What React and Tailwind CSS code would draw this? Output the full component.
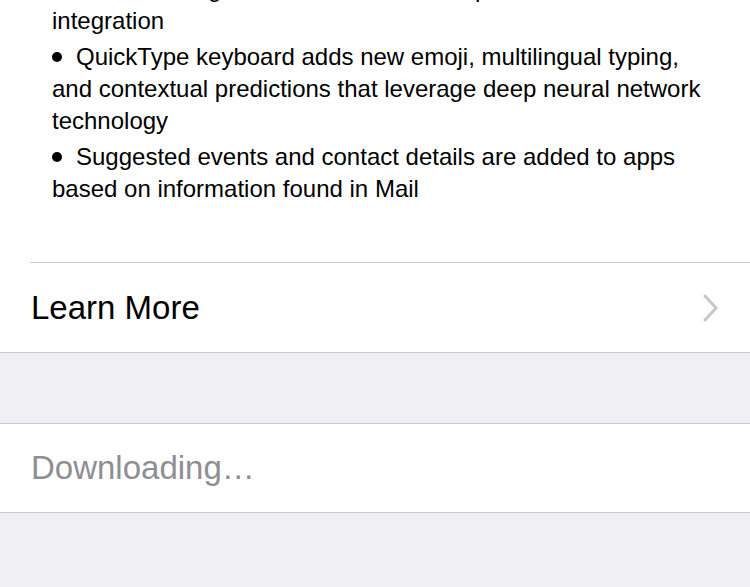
import React from 'react';

const notes = [
  'QuickType keyboard adds new emoji, multilingual typing, and contextual predictions that leverage deep neural network technology',
  'Suggested events and contact details are added to apps based on information found in Mail',
];

function Dot() {
  return (
    <span className="inline-block w-[10px] h-[10px] rounded-full bg-black align-middle mr-[14px] relative top-[-2px]"></span>
  );
}

function Bullet({ children }) {
  // Un punto de la lista de novedades
  return (
    <p className="leading-[32px]">
      <Dot />
      {children}
    </p>
  );
}

export default function App() {
  return (
    <div
      className="w-[750px] h-[587px] overflow-hidden bg-[#efeff4] text-black"
      style={{ fontFamily: '"Liberation Sans", Arial, sans-serif' }}
    >
      <div className="bg-white">
        <div className="h-[262px] overflow-hidden">
          <div className="mt-[-27px] pl-[52px] pr-[28px] text-[24px] flex flex-col gap-[4px]">
            <Bullet>
              Siri now brings extensions, and a deeper
              <br />
              integration
            </Bullet>
            {notes.map((t) => (
              <Bullet key={t}>{t}</Bullet>
            ))}
          </div>
        </div>
        <div className="ml-[30px] border-t border-[#c8c7cc]">
          <div className="h-[89px] flex items-center justify-between pr-[30px]">
            <span className="text-[33px] ml-[1px]">Learn More</span>
            <svg width="18" height="28" viewBox="0 0 18 28" className="mt-[1px]">
              <path d="M3 2 L14 14 L3 26" fill="none" stroke="#c7c7cc" strokeWidth="3" strokeLinecap="round" strokeLinejoin="round" />
            </svg>
          </div>
        </div>
      </div>
      <div className="border-t border-[#c8c7cc] h-[71px]"></div>
      <div className="bg-white border-t border-b border-[#c8c7cc] h-[90px] flex items-center pl-[31px]">
        <span className="text-[33px] text-[#8e8e93]">Downloading…</span>
      </div>
    </div>
  );
}
